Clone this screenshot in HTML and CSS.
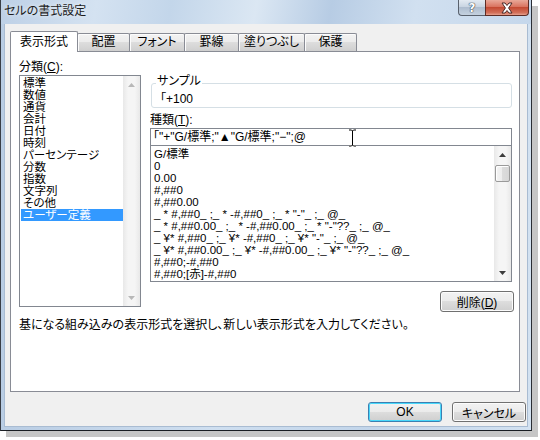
FILE: index.html
```html
<!DOCTYPE html>
<html lang="ja">
<head>
<meta charset="utf-8">
<title>セルの書式設定</title>
<link rel="stylesheet" href="styles.css">
</head>
<body>
<div class="window">
  <div class="titlebar">
    <span class="title">セルの書式設定</span>
    <div class="caption-btns">
      <div class="cbtn help">?</div>
      <div class="cbtn close">
        <svg width="16" height="12" viewBox="0 0 16 12"><path d="M3 1 L6 1 L8 3.5 L10 1 L13 1 L9.6 6 L13 11 L10 11 L8 8.5 L6 11 L3 11 L6.4 6 Z" fill="#fff" stroke="#4a2a28" stroke-width="1"/></svg>
      </div>
    </div>
  </div>
  <div class="client">
    <div class="tabs">
      <div class="tab active">表示形式</div>
      <div class="tab">配置</div>
      <div class="tab">フォント</div>
      <div class="tab">罫線</div>
      <div class="tab">塗りつぶし</div>
      <div class="tab">保護</div>
    </div>
    <div class="panel">
      <div class="panel-main">
        <div class="cat">
          <div class="label">分類(<u>C</u>):</div>
          <div class="listbox cat-list">
            <ul class="items">
              <li>標準</li>
              <li>数値</li>
              <li>通貨</li>
              <li>会計</li>
              <li>日付</li>
              <li>時刻</li>
              <li>パーセンテージ</li>
              <li>分数</li>
              <li>指数</li>
              <li>文字列</li>
              <li>その他</li>
              <li class="sel">ユーザー定義</li>
            </ul>
            <div class="vscroll disabled">
              <div class="sb-arrow"><svg width="7" height="4" viewBox="0 0 7 4"><path d="M0 4 L3.5 0 L7 4 Z" fill="#b8b8b8"/></svg></div>
              <div class="sb-track"></div>
              <div class="sb-arrow"><svg width="7" height="4" viewBox="0 0 7 4"><path d="M0 0 L3.5 4 L7 0 Z" fill="#b8b8b8"/></svg></div>
            </div>
          </div>
        </div>
        <div class="right">
          <fieldset class="sample">
            <legend>サンプル</legend>
            <div class="sample-val">「+100</div>
          </fieldset>
          <div class="label type-label">種類(<u>T</u>):</div>
          <div class="input">「"+"G/標準;"▲"G/標準;"−";@<svg class="ibeam" width="9" height="18" viewBox="0 0 9 18"><path d="M1 1 H3.5 L4.5 2 L5.5 1 H8 M4.5 2 V16 M1 17 H3.5 L4.5 16 L5.5 17 H8" fill="none" stroke="#fff" stroke-width="3"/><path d="M1 1 H3.5 L4.5 2 L5.5 1 H8 M4.5 2 V16 M1 17 H3.5 L4.5 16 L5.5 17 H8" fill="none" stroke="#000" stroke-width="1"/></svg></div>
          <div class="listbox fmt-list">
            <ul class="items">
              <li>G/標準</li>
              <li>0</li>
              <li>0.00</li>
              <li>#,##0</li>
              <li>#,##0.00</li>
              <li>_ * #,##0_ ;_ * -#,##0_ ;_ * "-"_ ;_ @_</li>
              <li>_ * #,##0.00_ ;_ * -#,##0.00_ ;_ * "-"??_ ;_ @_</li>
              <li>_ ¥* #,##0_ ;_ ¥* -#,##0_ ;_ ¥* "-"_ ;_ @_</li>
              <li>_ ¥* #,##0.00_ ;_ ¥* -#,##0.00_ ;_ ¥* "-"??_ ;_ @_</li>
              <li>#,##0;-#,##0</li>
              <li>#,##0;[赤]-#,##0</li>
            </ul>
            <div class="vscroll">
              <div class="sb-arrow"><svg width="7" height="4" viewBox="0 0 7 4"><path d="M0 4 L3.5 0 L7 4 Z" fill="#3c3c3c"/></svg></div>
              <div class="sb-track"><div class="sb-thumb"></div></div>
              <div class="sb-arrow"><svg width="7" height="4" viewBox="0 0 7 4"><path d="M0 0 L3.5 4 L7 0 Z" fill="#3c3c3c"/></svg></div>
            </div>
          </div>
          <div class="del-row"><button class="btn del">削除(<u>D</u>)</button></div>
        </div>
      </div>
      <p class="desc">基になる組み込みの表示形式を選択し、新しい表示形式を入力してください。</p>
    </div>
    <div class="buttons">
      <button class="btn ok">OK</button>
      <button class="btn cancel">キャンセル</button>
    </div>
  </div>
</div>
</body>
</html>
```

FILE: styles.css
```css
* { box-sizing: border-box; }
html, body { margin: 0; padding: 0; background: #ffffff; }
body {
  font-family: "Liberation Sans", "Noto Sans CJK JP", sans-serif;
  font-size: 12px;
  color: #000;
  font-feature-settings: "palt";
  width: 540px;
  height: 440px;
  overflow: hidden;
}

.window {
  width: 532px;
  height: 431px;
  background: linear-gradient(to right, #b9cde4, #cfdff0 40%, #c2d5ea 70%, #d3e2f1);
  border-left: 1px solid #3a3f47;
  border-right: 1px solid #2a2e35;
  border-bottom: 1px solid #1a1d22;
  box-shadow: 6px 6px 0 #c6c6c6;
  display: flex;
  flex-direction: column;
}

.titlebar {
  height: 24px;
  display: flex;
  justify-content: space-between;
  align-items: flex-start;
  background: linear-gradient(100deg, #bdd0e6 0%, #d4e2f1 18%, #c3d6ea 32%, #dbe7f3 48%, #b7cce4 62%, #d1e0f0 78%, #c5d7eb 100%);
}
.title {
  padding-left: 3px;
  line-height: 22px;
  font-size: 12px;
  color: #1c1c1c;
  text-shadow: 0 0 4px rgba(255,255,255,0.8);
}
.caption-btns {
  display: flex;
  margin-right: 2px;
}
.cbtn {
  height: 16px;
  border: 1px solid #59616d;
  border-top: none;
  display: flex;
  align-items: center;
  justify-content: center;
}
.help {
  width: 27px;
  border-radius: 0 0 0 4px;
  border-right: none;
  background: linear-gradient(#e3eaf2, #c9d5e2 45%, #aebdcf 50%, #c4d1df);
  color: #fff;
  font-weight: bold;
  font-family: "DejaVu Sans", sans-serif;
  font-size: 12px;
  line-height: 14px;
  text-shadow: 0 0 1px #3a4350, 0 0 1px #3a4350, 0 0 1px #3a4350;
}
.close {
  width: 44px;
  border-radius: 0 0 4px 0;
  border-color: #5d2c25;
  background: linear-gradient(#e9a899, #d9735f 45%, #c44a33 50%, #d2705a 85%, #e7a08e);
}

.client {
  flex: 1;
  margin: 0 3px 3px 3px;
  background: #f0f0f0;
  border: 1px solid #a9bcd2;
  border-top: none;
  padding: 7px 0 0 5px;
}

.tabs {
  display: flex;
  align-items: flex-end;
  height: 20px;
}
.tab {
  height: 18px;
  border: 1px solid #898c95;
  border-bottom: none;
  margin-left: -1px;
  background: linear-gradient(#f3f3f3, #ebebeb 50%, #dddddd 50%, #cfcfcf);
  text-align: center;
  line-height: 14px;
  padding-top: 1px;
  border-radius: 2px 2px 0 0;
  box-shadow: inset 1px 1px 0 #fcfcfc;
}
.tab:first-child { margin-left: 0; }
.tab:nth-child(1) { width: 68px; }
.tab:nth-child(2) { width: 53px; }
.tab:nth-child(3) { width: 56px; }
.tab:nth-child(4) { width: 55px; }
.tab:nth-child(5) { width: 67px; }
.tab:nth-child(6) { width: 53px; }
.tab.active {
  height: 21px;
  margin-bottom: -1px;
  background: #ffffff;
  box-shadow: none;
  padding-top: 3px;
  position: relative;
  z-index: 1;
}

.panel {
  width: 510px;
  height: 341px;
  background: #ffffff;
  border: 1px solid #898c95;
  padding: 7px 0 0 8px;
}
.panel-main {
  display: flex;
  gap: 9px;
  align-items: flex-start;
}
.label {
  line-height: 16px;
}
.cat { width: 122px; }

.listbox {
  border: 1px solid #828790;
  background: #fff;
  display: flex;
}
.items {
  list-style: none;
  margin: 0;
  padding: 1px 0 0 1px;
  flex: 1;
  overflow: hidden;
  white-space: nowrap;
  font-size: 11.5px;
}
.items li {
  line-height: 12px;
  height: 12px;
}
.cat-list {
  height: 232px;
}
.cat-list .items li { padding-left: 2px; }
.cat-list .items li.sel {
  background: #3399ff;
  color: #fff;
}

.vscroll {
  width: 17px;
  display: flex;
  flex-direction: column;
  background: linear-gradient(to right, #e8e8e8, #f5f5f5 30%, #f5f5f5 70%, #e8e8e8);
}
.sb-arrow {
  height: 17px;
  display: flex;
  align-items: center;
  justify-content: center;
}
.sb-track { flex: 1; padding: 2px 1px 0 1px; }
.sb-thumb {
  height: 17px;
  border: 1px solid #9a9a9a;
  border-radius: 2px;
  background: linear-gradient(to right, #f4f4f4, #ececec 50%, #dcdcdc 50%, #d6d6d6);
  box-shadow: inset 1px 1px 0 #ffffff;
}

.right { width: 364px; }
.sample {
  margin: 15px 2px 0 1px;
  border: 1px solid #d5dfe5;
  border-radius: 3px;
  padding: 0 8px 1px 8px;
}
.sample legend {
  padding: 0 1px 4px 1px;
  margin-left: -4px;
  line-height: 14px;
}
.sample-val { line-height: 14px; }

.type-label {
  margin-top: 5px;
  line-height: 15px;
}
.input {
  width: 362px;
  height: 18px;
  border: 1px solid #828790;
  padding-left: 2px;
  line-height: 16px;
  position: relative;
  white-space: nowrap;
}
.ibeam {
  position: absolute;
  left: 197px;
  top: 0px;
}
.fmt-list {
  width: 362px;
  height: 137px;
  margin-top: -1px;
}
.fmt-list .items { padding: 2px 0 0 3px; }

.del-row {
  display: flex;
  justify-content: flex-end;
  margin-top: 9px;
}
.btn {
  font-family: "Liberation Sans", "Noto Sans CJK JP", sans-serif;
  font-feature-settings: "palt";
  font-size: 12px;
  color: #000;
  border: 1px solid #707070;
  border-radius: 3px;
  background: linear-gradient(#f2f2f2, #ebebeb 50%, #dddddd 50%, #cfcfcf);
  box-shadow: inset 0 0 0 1px #fcfcfc;
  padding: 0;
  margin: 0;
}
.del { width: 74px; height: 21px; }

.desc {
  margin: 6px 0 0 0;
  line-height: 14px;
}

.buttons {
  display: flex;
  justify-content: flex-end;
  gap: 10px;
  width: 516px;
  margin-top: 10px;
}
.ok, .cancel { width: 74px; height: 20px; }
.ok {
  border-color: #3c7fb1;
  box-shadow: inset 0 0 0 1px #48d8fb;
}
```
